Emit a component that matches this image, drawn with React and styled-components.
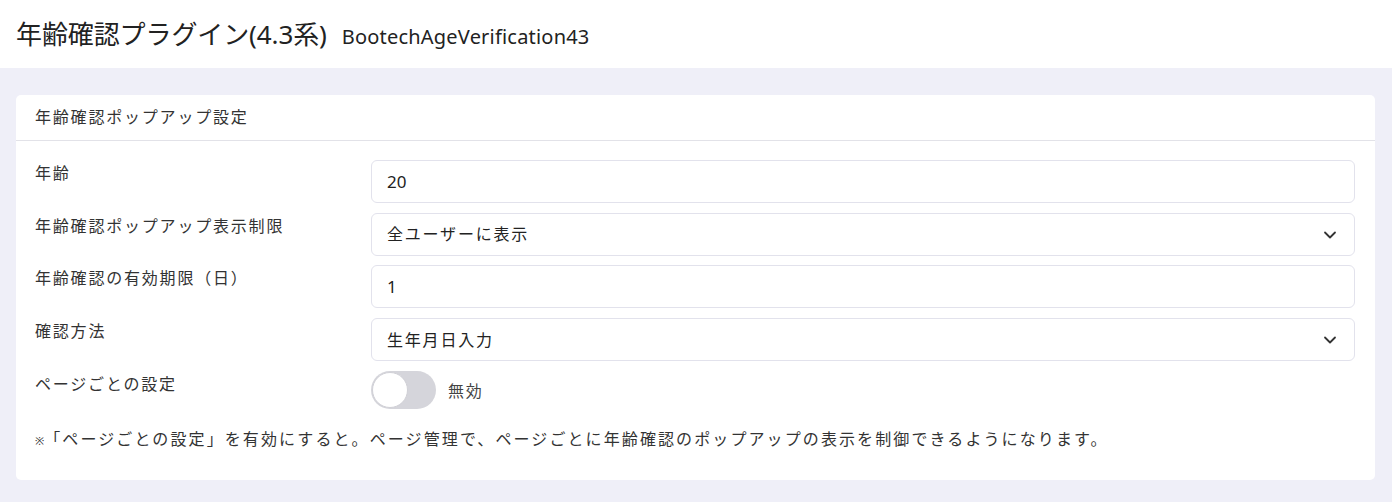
import React, { useState } from 'react';
import styled, { createGlobalStyle } from 'styled-components';

const GlobalStyle = createGlobalStyle`
	body {
		margin: 0;
		background: #efeff8;
		font-family: 'Noto Sans', 'Noto Sans CJK JP', sans-serif;
		color: #333;
	}
`;

const Header = styled.header`
	display: flex;
	align-items: baseline;
	gap: 15px;
	height: 68px;
	box-sizing: border-box;
	padding: 14px 16px 0;
	background: #fff;
	h1 {
		margin: 0;
		font-size: 26px;
		font-weight: 400;
		color: #222;
		letter-spacing: -0.1px;
	}
	span {
		font-size: 20px;
		letter-spacing: 0.2px;
		color: #222;
	}
`;

const Main = styled.main`
	padding: 27px 17px 22px 16px;
`;

const Card = styled.section`
	background: #fff;
	border-radius: 5px;
	padding-bottom: 30px;
`;

const CardHeader = styled.div`
	height: 46px;
	box-sizing: border-box;
	padding: 9px 19px 0;
	border-bottom: 1px solid #e2e2e8;
	font-size: 16px;
	letter-spacing: 1.8px;
	color: #333;
`;

const CardBody = styled.div`
	padding: 19px 20px 0 19px;
`;

const Row = styled.div`
	display: grid;
	grid-template-columns: 336px 1fr;
	align-items: start;
	margin-bottom: 9.7px;
`;

const Label = styled.label`
	font-size: 16px;
	letter-spacing: 1.8px;
	color: #333;
`;

const fieldStyle = `
	width: 100%;
	height: 43px;
	box-sizing: border-box;
	padding: 0 15px;
	border: 1px solid #e2e2ec;
	border-radius: 6px;
	font-family: inherit;
	font-size: 16px;
	color: #222;
	background: #fff;
	outline: none;
`;

const Input = styled.input`
	${fieldStyle}
	font-size: 17px;
`;

const SelectWrap = styled.div`
	position: relative;
	svg {
		position: absolute;
		right: 18px;
		top: 15px;
		pointer-events: none;
	}
`;

const Select = styled.select`
	${fieldStyle}
	letter-spacing: 1.8px;
	appearance: none;
`;

const SwitchRow = styled.div`
	display: flex;
	align-items: center;
	gap: 12px;
	font-size: 16px;
	letter-spacing: 1.8px;
	color: #444;
`;

const Switch = styled.button`
	position: relative;
	width: 65px;
	height: 38px;
	padding: 0;
	border: none;
	border-radius: 19px;
	background: ${(p) => (p.$on ? '#3b6fd8' : '#d5d5db')};
	cursor: pointer;
	&::after {
		content: '';
		position: absolute;
		top: 1px;
		left: ${(p) => (p.$on ? '28px' : '1px')};
		width: 34px;
		height: 34px;
		border-radius: 50%;
		background: #fff;
		border: 1px solid #d0d0d6;
	}
`;

const Note = styled.p`
	margin: 17px 0 0;
	font-size: 16px;
	letter-spacing: 2.1px;
	color: #333;
	em {
		font-style: normal;
		font-size: 11px;
		letter-spacing: 0;
	}
`;

const Chevron = () => (
	<svg width='14' height='14' viewBox='0 0 14 14' fill='none'>
		<path d='M2 4.5l5 5 5-5' stroke='#333' strokeWidth='1.8' strokeLinecap='round' strokeLinejoin='round' />
	</svg>
);

const App = () => {
	const [perPage, setPerPage] = useState(false);

	return (
		<>
			<GlobalStyle />
			<Header>
				<h1>年齢確認プラグイン(4.3系)</h1>
				<span>BootechAgeVerification43</span>
			</Header>
			<Main>
				<Card>
					<CardHeader>年齢確認ポップアップ設定</CardHeader>
					<CardBody>
						<Row>
							<Label>年齢</Label>
							<Input defaultValue='20' />
						</Row>
						<Row>
							<Label>年齢確認ポップアップ表示制限</Label>
							<SelectWrap>
								<Select defaultValue='all'>
									<option value='all'>全ユーザーに表示</option>
								</Select>
								<Chevron />
							</SelectWrap>
						</Row>
						<Row>
							<Label>年齢確認の有効期限（日）</Label>
							<Input defaultValue='1' />
						</Row>
						<Row>
							<Label>確認方法</Label>
							<SelectWrap>
								<Select defaultValue='birth'>
									<option value='birth'>生年月日入力</option>
								</Select>
								<Chevron />
							</SelectWrap>
						</Row>
						<Row>
							<Label>ページごとの設定</Label>
							<SwitchRow>
								<Switch $on={perPage} onClick={() => setPerPage(!perPage)} />
								{perPage ? '有効' : '無効'}
							</SwitchRow>
						</Row>
						<Note>
							<em>※</em>「ページごとの設定」を有効にすると。ページ管理で、ページごとに年齢確認のポップアップの表示を制御できるようになります。
						</Note>
					</CardBody>
				</Card>
			</Main>
		</>
	);
};

export default App;
